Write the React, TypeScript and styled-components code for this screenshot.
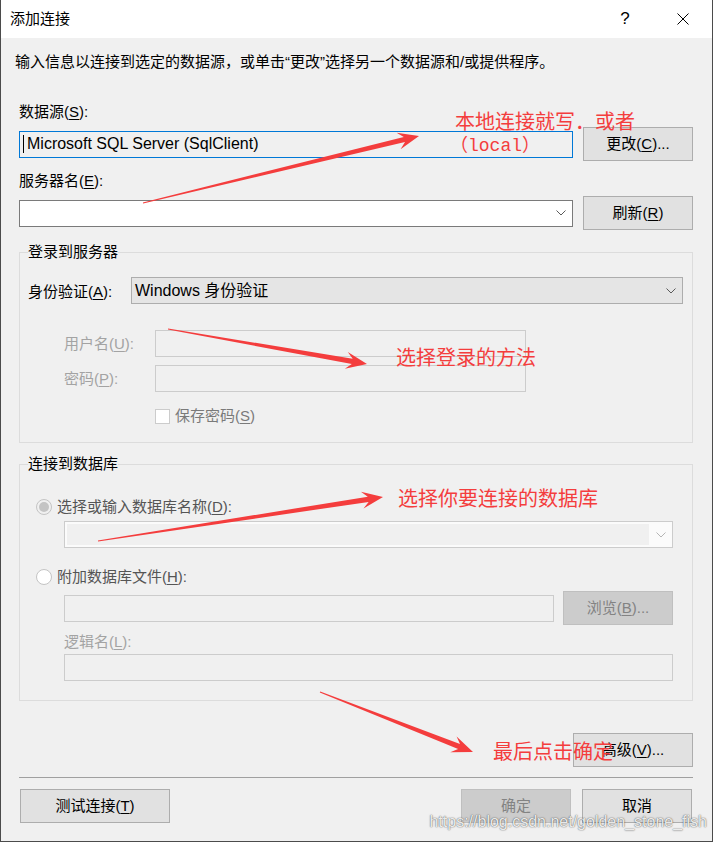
import styled, { createGlobalStyle } from "styled-components";

type Pt = [number, number];

const RED = "#f43d3d";

const GlobalStyle = createGlobalStyle`
  html, body {
    margin: 0;
    padding: 0;
    background: #f0f0f0;
  }
  body {
    font-family: "Liberation Sans", "Noto Sans CJK SC", sans-serif;
    font-size: 15px;
    color: #000;
  }
  * {
    box-sizing: border-box;
  }
  u {
    text-decoration-thickness: 1px;
    text-underline-offset: 2px;
  }
`;

const arrows: [Pt, Pt][] = [
  [[143, 203], [419, 136]],
  [[168, 329], [367, 364]],
  [[98, 541], [383, 497]],
  [[320, 692], [473, 752]],
];

const notes = [
  { x: 455, y: 111, text: "本地连接就写．或者" },
  { x: 450, y: 136, text: "（local）", mono: true },
  { x: 396, y: 347, text: "选择登录的方法" },
  { x: 398, y: 488, text: "选择你要连接的数据库" },
  { x: 493, y: 741, text: "最后点击确定" },
];

// tapered arrow, thin at the tail and a notched head at the tip
function arrowPoints(from: Pt, to: Pt) {
  const [x1, y1] = from;
  const [x2, y2] = to;
  const len = Math.hypot(x2 - x1, y2 - y1);
  const ux = (x2 - x1) / len;
  const uy = (y2 - y1) / len;
  const at = (t: number, w: number) =>
    `${(x1 + ux * t - uy * w).toFixed(1)},${(y1 + uy * t + ux * w).toFixed(1)}`;
  return [
    at(0, 0.6),
    at(len - 15, 2.6),
    at(len - 21, 8.5),
    at(len, 0),
    at(len - 21, -8.5),
    at(len - 15, -2.6),
    at(0, -0.6),
  ].join(" ");
}

function Chevron({ color = "#5a5a5a" }: { color?: string }) {
  return (
    <svg width="10" height="6" viewBox="0 0 10 6">
      <polyline points="0.5,0.5 5,5 9.5,0.5" fill="none" stroke={color} strokeWidth="1" />
    </svg>
  );
}

function App() {
  return (
    <>
      <GlobalStyle />
      <Window>
        <TitleBar>
          <Title>添加连接</Title>
          <CaptionButton>
            <HelpGlyph>?</HelpGlyph>
          </CaptionButton>
          <CaptionButton>
            <svg width="12" height="12" viewBox="0 0 12 12">
              <path d="M0.5 0.5 L11.5 11.5 M11.5 0.5 L0.5 11.5" stroke="#000" strokeWidth="1" />
            </svg>
          </CaptionButton>
        </TitleBar>

        <Content>
          <Intro>输入信息以连接到选定的数据源，或单击“更改”选择另一个数据源和/或提供程序。</Intro>

          <FieldLabel $mt={30}>
            数据源(<u>S</u>):
          </FieldLabel>
          <ControlRow $mt={5}>
            <TextBox $variant="focus">
              <Caret />
              <SourceText>Microsoft SQL Server (SqlClient)</SourceText>
            </TextBox>
            <Button>
              更改(<u>C</u>)...
            </Button>
          </ControlRow>

          <FieldLabel $mt={10}>
            服务器名(<u>E</u>):
          </FieldLabel>
          <ControlRow $mt={5}>
            <Combo $variant="white">
              <ComboText />
              <Chevron />
            </Combo>
            <Button>
              刷新(<u>R</u>)
            </Button>
          </ControlRow>

          <Group $mt={12} $pt={15} $pb={16}>
            <Legend>登录到服务器</Legend>
            <AuthRow>
              <span>
                身份验证(<u>A</u>):
              </span>
              <Combo $variant="grey">
                <ComboText>Windows 身份验证</ComboText>
                <Chevron />
              </Combo>
            </AuthRow>
            <CredRow $mt={26}>
              <FieldLabel $disabled>
                用户名(<u>U</u>):
              </FieldLabel>
              <TextBox $variant="disabled" />
            </CredRow>
            <CredRow $mt={8}>
              <FieldLabel $disabled>
                密码(<u>P</u>):
              </FieldLabel>
              <TextBox $variant="disabled" />
            </CredRow>
            <CheckRow>
              <CheckBox />
              <span>
                保存密码(<u>S</u>)
              </span>
            </CheckRow>
          </Group>

          <Group $mt={11} $pt={23} $pb={19}>
            <Legend>连接到数据库</Legend>
            <RadioRow>
              <Radio $checked />
              <span>
                选择或输入数据库名称(<u>D</u>):
              </span>
            </RadioRow>
            <Indent $mt={4}>
              <Combo $variant="disabled">
                <ComboField />
                <ChevronBox>
                  <Chevron color="#b5b5b5" />
                </ChevronBox>
              </Combo>
            </Indent>
            <RadioRow $mt={19}>
              <Radio />
              <span>
                附加数据库文件(<u>H</u>):
              </span>
            </RadioRow>
            <Indent $mt={4}>
              <FileRow>
                <TextBox $variant="disabled" />
                <Button $disabled>
                  浏览(<u>B</u>)...
                </Button>
              </FileRow>
            </Indent>
            <Indent $mt={7}>
              <FieldLabel $disabled>
                逻辑名(<u>L</u>):
              </FieldLabel>
            </Indent>
            <Indent $mt={2}>
              <TextBox $variant="disabled" />
            </Indent>
          </Group>

          <AdvancedRow>
            <Button $width={120}>
              高级(<u>V</u>)...
            </Button>
          </AdvancedRow>

          <Separator />

          <FooterRow>
            <Button $width={150}>
              测试连接(<u>T</u>)
            </Button>
            <FooterRight>
              <Button $width={110} $disabled>
                确定
              </Button>
              <Button $width={110}>取消</Button>
            </FooterRight>
          </FooterRow>
        </Content>

        <Overlay width="713" height="842" viewBox="0 0 713 842">
          {arrows.map(([from, to], i) => (
            <polygon key={i} points={arrowPoints(from, to)} fill={RED} />
          ))}
        </Overlay>
        {notes.map((n) => (
          <Note key={n.text} $x={n.x} $y={n.y} $mono={n.mono}>
            {n.text}
          </Note>
        ))}
        <Watermark>https://blog.csdn.net/golden_stone_fish</Watermark>
      </Window>
    </>
  );
}

const Window = styled.div`
  position: relative;
  width: 713px;
  height: 842px;
  display: flex;
  flex-direction: column;
  background: #f0f0f0;
  border: 1px solid #4b4b4b;
  border-top: none;
  overflow: hidden;
`;

const TitleBar = styled.div`
  flex: none;
  height: 38px;
  display: flex;
  align-items: center;
  padding-left: 9px;
  background: #fff;
`;

const Title = styled.div`
  flex: 1;
  font-size: 15px;
  line-height: 20px;
`;

const CaptionButton = styled.div`
  width: 58px;
  height: 38px;
  display: flex;
  align-items: center;
  justify-content: center;
`;

const HelpGlyph = styled.span`
  font-size: 17px;
  line-height: 20px;
  font-weight: 300;
`;

const Content = styled.div`
  flex: 1;
  display: flex;
  flex-direction: column;
  padding: 14px 19px 0 18px;
`;

const Intro = styled.p`
  margin: 0 0 0 -4px;
  line-height: 20px;
`;

const FieldLabel = styled.div<{ $mt?: number; $disabled?: boolean }>`
  margin-top: ${(p) => p.$mt ?? 0}px;
  line-height: 20px;
  color: ${(p) => (p.$disabled ? "#a3a3a3" : "#000")};
  white-space: nowrap;
`;

const ControlRow = styled.div<{ $mt: number }>`
  display: grid;
  grid-template-columns: 1fr 110px;
  column-gap: 10px;
  align-items: center;
  margin-top: ${(p) => p.$mt}px;
`;

const Button = styled.button<{ $width?: number; $disabled?: boolean }>`
  width: ${(p) => (p.$width ? `${p.$width}px` : "100%")};
  height: 34px;
  padding: 0;
  font-family: inherit;
  font-size: 15px;
  line-height: 20px;
  background: ${(p) => (p.$disabled ? "#cccccc" : "#e1e1e1")};
  border: 1px solid ${(p) => (p.$disabled ? "#bfbfbf" : "#adadad")};
  color: ${(p) => (p.$disabled ? "#838383" : "#000")};
  border-radius: 0;
`;

const textBoxColors = {
  focus: { border: "#0078d7", bg: "#f0f0f0" },
  disabled: { border: "#cccccc", bg: "#f0f0f0" },
  white: { border: "#7a7a7a", bg: "#fff" },
};

const TextBox = styled.div<{ $variant: keyof typeof textBoxColors }>`
  height: 27px;
  display: flex;
  align-items: center;
  padding-left: 3px;
  border: 1px solid ${(p) => textBoxColors[p.$variant].border};
  background: ${(p) => textBoxColors[p.$variant].bg};
`;

const Caret = styled.span`
  width: 1px;
  height: 18px;
  background: #000;
`;

const SourceText = styled.span`
  margin-left: 3px;
  font-size: 16px;
  line-height: 20px;
  white-space: nowrap;
`;

const comboColors = {
  white: { border: "#7a7a7a", bg: "#fff" },
  grey: { border: "#adadad", bg: "#e5e5e5" },
  disabled: { border: "#cccccc", bg: "#fbfbfb" },
};

const Combo = styled.div<{ $variant: keyof typeof comboColors }>`
  height: 27px;
  display: flex;
  align-items: center;
  padding: ${(p) => (p.$variant === "disabled" ? "0" : "0 6px 0 3px")};
  border: 1px solid ${(p) => comboColors[p.$variant].border};
  background: ${(p) => comboColors[p.$variant].bg};
`;

const ComboText = styled.span`
  flex: 1;
  font-size: 16px;
  line-height: 20px;
  white-space: nowrap;
`;

const ComboField = styled.div`
  flex: 1;
  align-self: stretch;
  margin: 2px 0 2px 2px;
  background: #f0f0f0;
`;

const ChevronBox = styled.div`
  width: 23px;
  display: flex;
  justify-content: center;
`;

const Group = styled.fieldset<{ $mt: number; $pt: number; $pb: number }>`
  margin: ${(p) => p.$mt}px 0 0;
  padding: ${(p) => `${p.$pt}px 9px ${p.$pb}px 8px`};
  min-width: 0;
  border: 1px solid #dcdcdc;
`;

const Legend = styled.legend`
  padding: 0;
  line-height: 20px;
`;

const AuthRow = styled.div`
  display: grid;
  grid-template-columns: 103px 1fr;
  align-items: center;
  white-space: nowrap;
`;

const CredRow = styled.div<{ $mt: number }>`
  display: grid;
  grid-template-columns: 91px 371px;
  align-items: center;
  margin: ${(p) => p.$mt}px 0 0 36px;
`;

const CheckRow = styled.div`
  display: flex;
  align-items: center;
  gap: 5px;
  height: 20px;
  margin: 14px 0 0 127px;
  line-height: 20px;
  color: #7a7a7a;
`;

const CheckBox = styled.span`
  width: 15px;
  height: 15px;
  background: #fff;
  border: 1px solid #cccccc;
`;

const RadioRow = styled.div<{ $mt?: number }>`
  display: flex;
  align-items: center;
  gap: 5px;
  height: 20px;
  margin: ${(p) => p.$mt ?? 0}px 0 0 8px;
  line-height: 20px;
  color: #555;
`;

const Radio = styled.span<{ $checked?: boolean }>`
  width: 16px;
  height: 16px;
  border-radius: 50%;
  border: 1px solid #c4c4c4;
  background: ${(p) => (p.$checked ? "#f0f0f0" : "#fff")};
  display: flex;
  align-items: center;
  justify-content: center;

  &::after {
    content: "";
    display: ${(p) => (p.$checked ? "block" : "none")};
    width: 10px;
    height: 10px;
    border-radius: 50%;
    background: #c4c4c4;
  }
`;

const Indent = styled.div<{ $mt: number }>`
  margin: ${(p) => p.$mt}px 10px 0 36px;
`;

const FileRow = styled.div`
  display: grid;
  grid-template-columns: 1fr 110px;
  column-gap: 9px;
  align-items: center;
`;

const AdvancedRow = styled.div`
  display: flex;
  justify-content: flex-end;
  margin-top: 32px;
`;

const Separator = styled.div`
  height: 1px;
  margin-top: 10px;
  background: #a0a0a0;
`;

const FooterRow = styled.div`
  display: flex;
  justify-content: space-between;
  margin: 11px 1px 0 1px;
`;

const FooterRight = styled.div`
  display: flex;
  gap: 11px;
`;

const Overlay = styled.svg`
  position: absolute;
  left: -1px;
  top: 0;
  pointer-events: none;
`;

const Note = styled.div<{ $x: number; $y: number; $mono?: boolean }>`
  position: absolute;
  left: ${(p) => p.$x - 1}px;
  top: ${(p) => p.$y}px;
  font-family: ${(p) =>
    p.$mono ? `"Liberation Mono", "Noto Sans CJK SC", monospace` : `"Noto Sans CJK SC", sans-serif`};
  font-size: ${(p) => (p.$mono ? 18 : 20)}px;
  line-height: 20px;
  color: ${RED};
  white-space: nowrap;
`;

const Watermark = styled.div`
  position: absolute;
  right: 5px;
  bottom: 10px;
  font-family: "Liberation Sans", sans-serif;
  font-size: 16px;
  line-height: 18px;
  color: rgba(255, 255, 255, 0.9);
  text-shadow: 0 0 1px rgba(0, 0, 0, 0.6), 0 0 2px rgba(0, 0, 0, 0.35);
  white-space: nowrap;
`;

export default App;
